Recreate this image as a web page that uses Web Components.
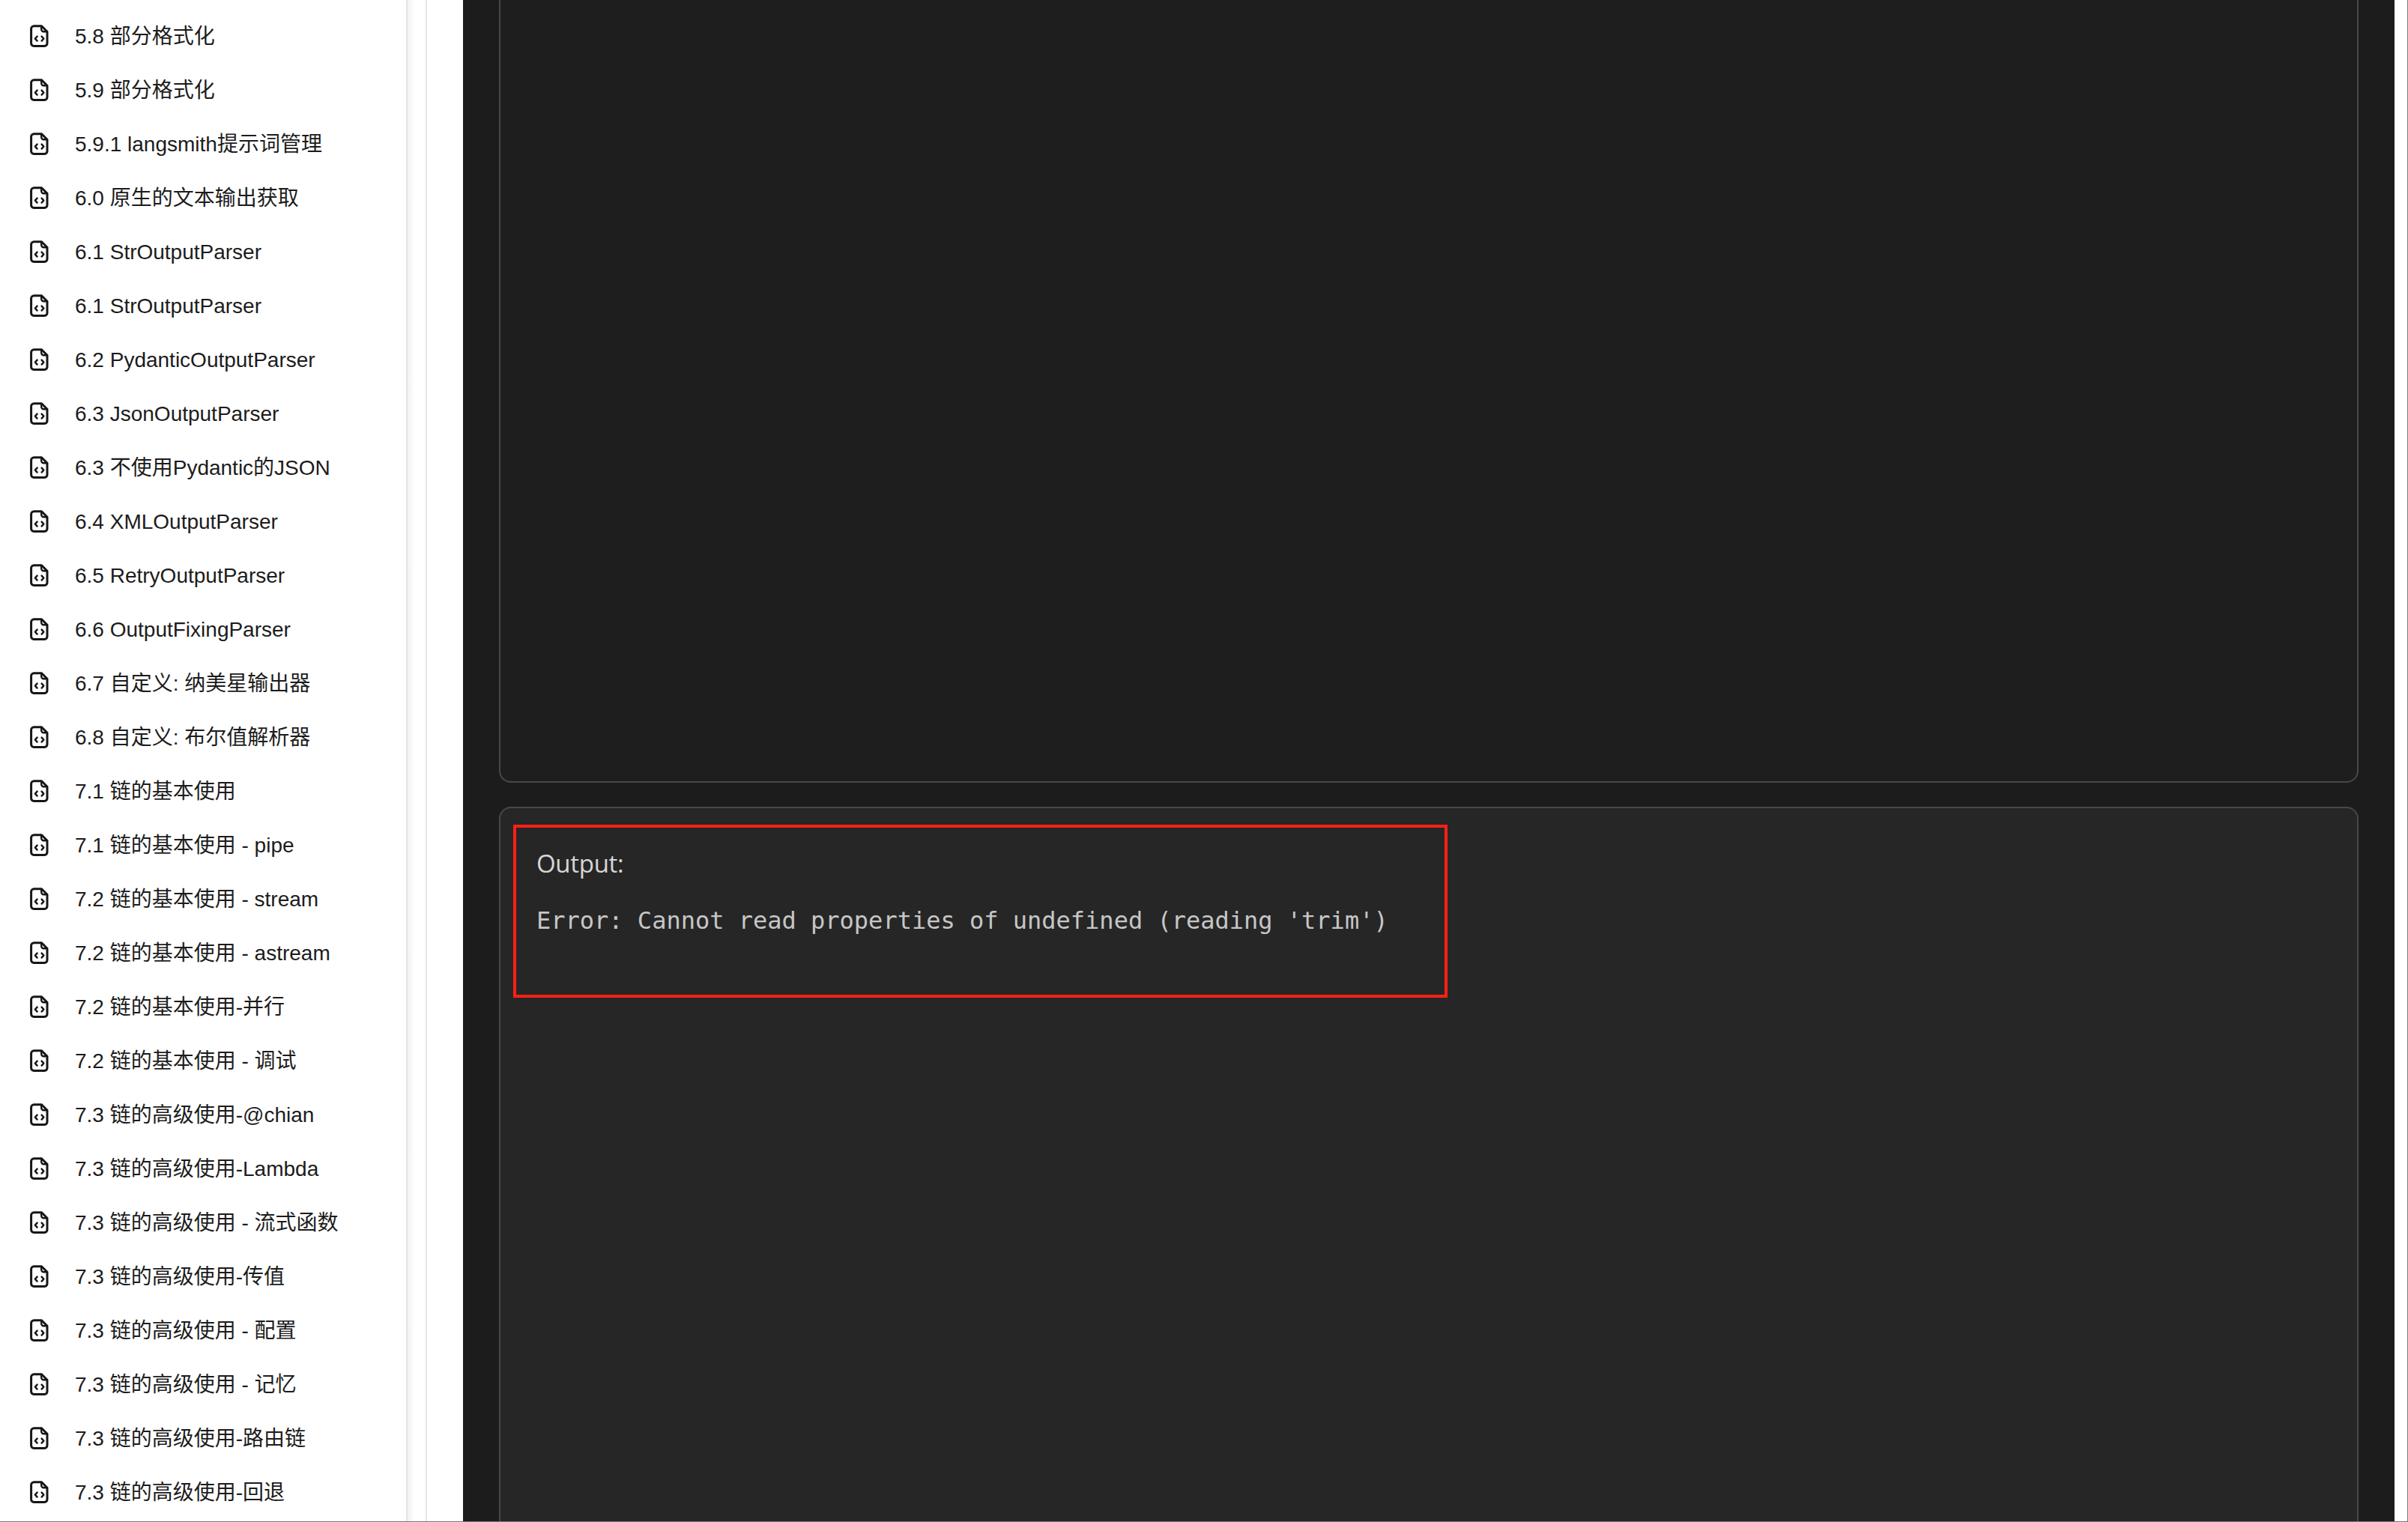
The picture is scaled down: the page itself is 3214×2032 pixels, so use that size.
<!DOCTYPE html>
<html lang="zh">
<head>
<meta charset="utf-8">
<title>Output</title>
<style>
  html, body { margin: 0; padding: 0; height: 100%; background: #fff; overflow: hidden; }
</style>
</head>
<body>
<app-shell>
  <side-nav slot="nav">
    <nav-item>5.8 部分格式化</nav-item>
    <nav-item>5.9 部分格式化</nav-item>
    <nav-item>5.9.1 langsmith提示词管理</nav-item>
    <nav-item>6.0 原生的文本输出获取</nav-item>
    <nav-item>6.1 StrOutputParser</nav-item>
    <nav-item>6.1 StrOutputParser</nav-item>
    <nav-item>6.2 PydanticOutputParser</nav-item>
    <nav-item>6.3 JsonOutputParser</nav-item>
    <nav-item>6.3 不使用Pydantic的JSON</nav-item>
    <nav-item>6.4 XMLOutputParser</nav-item>
    <nav-item>6.5 RetryOutputParser</nav-item>
    <nav-item>6.6 OutputFixingParser</nav-item>
    <nav-item>6.7 自定义: 纳美星输出器</nav-item>
    <nav-item>6.8 自定义: 布尔值解析器</nav-item>
    <nav-item>7.1 链的基本使用</nav-item>
    <nav-item>7.1 链的基本使用 - pipe</nav-item>
    <nav-item>7.2 链的基本使用 - stream</nav-item>
    <nav-item>7.2 链的基本使用 - astream</nav-item>
    <nav-item>7.2 链的基本使用-并行</nav-item>
    <nav-item>7.2 链的基本使用 - 调试</nav-item>
    <nav-item>7.3 链的高级使用-@chian</nav-item>
    <nav-item>7.3 链的高级使用-Lambda</nav-item>
    <nav-item>7.3 链的高级使用 - 流式函数</nav-item>
    <nav-item>7.3 链的高级使用-传值</nav-item>
    <nav-item>7.3 链的高级使用 - 配置</nav-item>
    <nav-item>7.3 链的高级使用 - 记忆</nav-item>
    <nav-item>7.3 链的高级使用-路由链</nav-item>
    <nav-item>7.3 链的高级使用-回退</nav-item>
  </side-nav>
  <dark-panel slot="main">
    <code-card class="top"></code-card>
    <code-card class="bottom">
      <output-box label="Output:">Error: Cannot read properties of undefined (reading 'trim')</output-box>
    </code-card>
  </dark-panel>
</app-shell>

<script>
class AppShell extends HTMLElement {
  connectedCallback() {
    const root = this.attachShadow({ mode: "open" });
    root.innerHTML = `
      <style>
        :host {
          display: block;
          width: 3214px;
          height: 2032px;
          box-sizing: border-box;
          border-right: 1px solid #7a7a7a;
          border-bottom: 1px solid #7a7a7a;
          background: #fff;
          overflow: hidden;
        }
        .row { display: flex; height: 100%; }
        .rail {
          flex: none;
          width: 28px;
          box-sizing: border-box;
          border-left: 2px solid #e4e4e4;
          border-right: 2px solid #e4e4e4;
          background: linear-gradient(90deg, #f1f1f1, #fff 9px);
        }
        .gutter { flex: none; width: 48px; }
        .end { flex: none; width: 17px; }
      </style>
      <div class="row">
        <slot name="nav"></slot>
        <div class="rail"></div>
        <div class="gutter"></div>
        <slot name="main"></slot>
        <div class="end"></div>
      </div>
    `;
  }
}

class SideNav extends HTMLElement {
  connectedCallback() {
    const root = this.attachShadow({ mode: "open" });
    root.innerHTML = `
      <style>
        :host {
          display: block;
          flex: none;
          width: 542px;
          box-sizing: border-box;
          padding-top: 12px;
          overflow: hidden;
          background: #fff;
        }
      </style>
      <slot></slot>
    `;
  }
}

class NavItem extends HTMLElement {
  connectedCallback() {
    const root = this.attachShadow({ mode: "open" });
    root.innerHTML = `
      <style>
        :host {
          display: flex;
          align-items: center;
          gap: 35px;
          height: 72px;
          padding-left: 40px;
          font: 28px/32px "Liberation Sans", "Noto Sans CJK SC", sans-serif;
          color: #1c1c1c;
          white-space: nowrap;
        }
        svg { flex: none; display: block; }
        span { padding-top: 1px; }
      </style>
      <svg width="25" height="30" viewBox="0 0 25 30" fill="none" stroke="#161616" stroke-linecap="round" stroke-linejoin="round">
        <path stroke-width="3" d="M5.5 1.7H15.5L23 9.2V24.8a3.6 3.6 0 0 1-3.6 3.6H5.2a3.6 3.6 0 0 1-3.6-3.6V5.5a3.8 3.8 0 0 1 3.9-3.8Z"/>
        <path stroke-width="2.4" d="M15.2 2.4V6.2a3 3 0 0 0 3 3H22.4"/>
        <path stroke-width="2.4" d="M9.6 15.6 6.9 18.6l2.7 3M15.6 15.6l2.7 3-2.7 3"/>
      </svg>
      <span><slot></slot></span>
    `;
  }
}

class DarkPanel extends HTMLElement {
  connectedCallback() {
    const root = this.attachShadow({ mode: "open" });
    root.innerHTML = `
      <style>
        :host {
          flex: 1;
          min-width: 0;
          display: flex;
          flex-direction: column;
          gap: 32px;
          box-sizing: border-box;
          padding: 0 48px;
          background: #1c1c1c;
        }
      </style>
      <slot></slot>
    `;
  }
}

class CodeCard extends HTMLElement {
  connectedCallback() {
    const root = this.attachShadow({ mode: "open" });
    root.innerHTML = `
      <style>
        :host {
          display: block;
          box-sizing: border-box;
          border: 2px solid #484848;
        }
        :host(.top) {
          flex: none;
          height: 1045px;
          border-top: 0;
          border-radius: 0 0 16px 16px;
          background: #1e1e1e;
        }
        :host(.bottom) {
          flex: 1;
          border-bottom: 0;
          border-radius: 16px 16px 0 0;
          background: #262626;
          padding: 22px 0 0 17px;
        }
      </style>
      <slot></slot>
    `;
  }
}

class OutputBox extends HTMLElement {
  connectedCallback() {
    const root = this.attachShadow({ mode: "open" });
    root.innerHTML = `
      <style>
        :host {
          display: block;
          box-sizing: border-box;
          width: 1247px;
          height: 231px;
          border: 4px solid #ff2015;
          padding: 0 28px 0 27px;
          color: #d2d2d2;
        }
        .label {
          font: 400 33px/42px "Open Sans", "Noto Sans", sans-serif;
          letter-spacing: -0.3px;
          margin-top: 27px;
          color: #d6d6d6;
        }
        pre {
          margin: 35px 0 0;
          font: 32px/40px "DejaVu Sans Mono", monospace;
          color: #c6c6c6;
        }
      </style>
      <div class="label"></div>
      <pre><slot></slot></pre>
    `;
    root.querySelector(".label").textContent = this.getAttribute("label");
  }
}

customElements.define("app-shell", AppShell);
customElements.define("side-nav", SideNav);
customElements.define("nav-item", NavItem);
customElements.define("dark-panel", DarkPanel);
customElements.define("code-card", CodeCard);
customElements.define("output-box", OutputBox);
</script>
</body>
</html>
